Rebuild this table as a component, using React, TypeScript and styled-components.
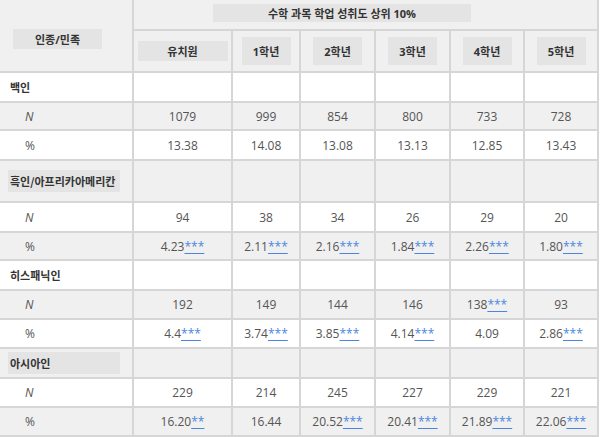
import React from "react"
import styled, { createGlobalStyle } from "styled-components"

const GlobalStyle = createGlobalStyle`
  html, body {
    margin: 0;
    padding: 0;
    background: #ffffff;
    overflow: hidden;
  }
`

const colours = {
  line: "#d6d6d6",
  shade: "#f0f0f0",
  box: "#e4e4e4",
  text: "#333333",
  number: "#555555",
  link: "#4a86e0",
}

const Table = styled.div`
  display: grid;
  grid-template-columns: 132px 97px 66px 73px 73px 72px 72px;
  gap: 2px;
  width: max-content;
  padding: 0 2px 2px 0;
  background: ${colours.line};
`

const Corner = styled.div`
  grid-column: 1;
  grid-row: 1 / 3;
  display: flex;
  align-items: center;
  padding: 6px 0 0 13px;
  background: ${colours.shade};
`

const Title = styled.div`
  grid-column: 2 / 8;
  grid-row: 1;
  height: 29px;
  padding: 4px 0 0 79px;
  box-sizing: border-box;
  background: ${colours.shade};
`

const HeadBox = styled.div<{ $w: number; $h: number }>`
  display: flex;
  align-items: center;
  justify-content: center;
  width: ${p => p.$w}px;
  height: ${p => p.$h}px;
  background: ${colours.box};
  color: ${colours.text};
  font-family: "Open Sans", "Noto Sans CJK KR", sans-serif;
  font-size: 11px;
  font-weight: 700;
  white-space: nowrap;
`

const GradeCell = styled.div`
  grid-row: 2;
  height: 40px;
  display: flex;
  align-items: center;
  justify-content: center;
  background: ${colours.shade};
`

const Cell = styled.div<{ $h: number; $shade: boolean }>`
  height: ${p => p.$h}px;
  display: flex;
  align-items: center;
  justify-content: center;
  background: ${p => (p.$shade ? colours.shade : "#ffffff")};
  color: ${colours.number};
  font-family: "Open Sans", "Noto Sans CJK KR", sans-serif;
  font-size: 12px;
  white-space: nowrap;
`

const GroupCell = styled(Cell)`
  justify-content: flex-start;
  padding-left: 8px;
`

const GroupLabel = styled.div<{ $shade: boolean }>`
  width: 112px;
  height: 22px;
  display: flex;
  align-items: center;
  padding-left: 2px;
  box-sizing: border-box;
  background: ${p => (p.$shade ? colours.box : "transparent")};
  color: ${colours.text};
  font-family: "Noto Sans CJK KR", sans-serif;
  font-size: 11px;
  font-weight: 700;
`

const StatCell = styled(Cell)<{ $italic?: boolean }>`
  justify-content: flex-start;
  padding-left: 25px;
  font-style: ${p => (p.$italic ? "italic" : "normal")};
`

const Stars = styled.a`
  color: ${colours.link};
  text-decoration: underline;
  text-underline-offset: 2px;
`

type Group = {
  name: string
  heights: [number, number, number]
  n: string[]
  pct: string[]
}

const grades = ["1학년", "2학년", "3학년", "4학년", "5학년"]

const groups: Group[] = [
  {
    name: "백인",
    heights: [28, 26, 28],
    n: ["1079", "999", "854", "800", "733", "728"],
    pct: ["13.38", "14.08", "13.08", "13.13", "12.85", "13.43"],
  },
  {
    name: "흑인/아프리카아메리칸",
    heights: [40, 28, 26],
    n: ["94", "38", "34", "26", "29", "20"],
    pct: ["4.23***", "2.11***", "2.16***", "1.84***", "2.26***", "1.80***"],
  },
  {
    name: "히스패닉인",
    heights: [28, 27, 27],
    n: ["192", "149", "144", "146", "138***", "93"],
    pct: ["4.4***", "3.74***", "3.85***", "4.14***", "4.09", "2.86***"],
  },
  {
    name: "아시아인",
    heights: [28, 27, 27],
    n: ["229", "214", "245", "227", "229", "221"],
    pct: ["16.20**", "16.44", "20.52***", "20.41***", "21.89***", "22.06***"],
  },
]

const Value = ({ text }: { text: string }) => {
  const i = text.indexOf("*")
  if (i < 0) return <>{text}</>
  return (
    <>
      {text.slice(0, i)}
      <Stars href="#">{text.slice(i)}</Stars>
    </>
  )
}

const App = () => {
  let row = 0
  return (
    <>
      <GlobalStyle />
      <Table>
        <Corner>
          <HeadBox $w={89} $h={20}>인종/민족</HeadBox>
        </Corner>
        <Title>
          <HeadBox $w={258} $h={18}>수학 과목 학업 성취도 상위 10%</HeadBox>
        </Title>
        <GradeCell>
          <HeadBox $w={90} $h={20}>유치원</HeadBox>
        </GradeCell>
        {grades.map(g => (
          <GradeCell key={g}>
            <HeadBox $w={49} $h={28}>{g}</HeadBox>
          </GradeCell>
        ))}
        {groups.map(group => {
          const [hg, hn, hp] = group.heights
          const sg = row++ % 2 === 1
          const sn = row++ % 2 === 1
          const sp = row++ % 2 === 1
          return (
            <React.Fragment key={group.name}>
              <GroupCell $h={hg} $shade={sg}>
                <GroupLabel $shade={sg}>{group.name}</GroupLabel>
              </GroupCell>
              {group.n.map((_, i) => (
                <Cell key={`g${i}`} $h={hg} $shade={sg} />
              ))}
              <StatCell $h={hn} $shade={sn} $italic>N</StatCell>
              {group.n.map((v, i) => (
                <Cell key={`n${i}`} $h={hn} $shade={sn}>
                  <Value text={v} />
                </Cell>
              ))}
              <StatCell $h={hp} $shade={sp}>%</StatCell>
              {group.pct.map((v, i) => (
                <Cell key={`p${i}`} $h={hp} $shade={sp}>
                  <Value text={v} />
                </Cell>
              ))}
            </React.Fragment>
          )
        })}
      </Table>
    </>
  )
}

export default App
